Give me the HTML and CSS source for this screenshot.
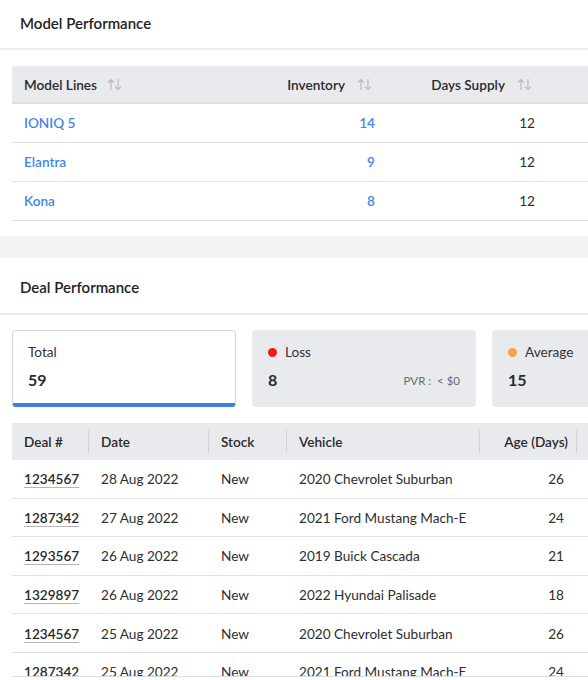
FILE: index.html
```html
<!DOCTYPE html>
<html>
<head>
<meta charset="utf-8">
<link rel="stylesheet" href="styles.css">
</head>
<body>
<div class="page">
  <section class="panel">
    <h2 class="panel-title first">Model Performance</h2>
    <div class="model-table">
      <div class="mt-row mt-head">
        <div class="mc name">Model Lines <svg class="sort" viewBox="0 0 15 13"><path d="M4 12V1.5M1 4.5L4 1.5L7 4.5M11 1V11.5M8 8.5L11 11.5L14 8.5"/></svg></div>
        <div class="mc inv">Inventory <svg class="sort" viewBox="0 0 15 13"><path d="M4 12V1.5M1 4.5L4 1.5L7 4.5M11 1V11.5M8 8.5L11 11.5L14 8.5"/></svg></div>
        <div class="mc days">Days Supply <svg class="sort" viewBox="0 0 15 13"><path d="M4 12V1.5M1 4.5L4 1.5L7 4.5M11 1V11.5M8 8.5L11 11.5L14 8.5"/></svg></div>
        <div class="mc"></div>
      </div>
      <div class="mt-row">
        <div class="mc name link">IONIQ 5</div>
        <div class="mc inv link">14</div>
        <div class="mc days">12</div>
        <div class="mc"></div>
      </div>
      <div class="mt-row">
        <div class="mc name link">Elantra</div>
        <div class="mc inv link">9</div>
        <div class="mc days">12</div>
        <div class="mc"></div>
      </div>
      <div class="mt-row">
        <div class="mc name link">Kona</div>
        <div class="mc inv link">8</div>
        <div class="mc days">12</div>
        <div class="mc"></div>
      </div>
    </div>
  </section>

  <div class="band"></div>

  <section class="panel">
    <h2 class="panel-title second">Deal Performance</h2>
    <div class="cards">
      <div class="card active">
        <div class="card-label">Total</div>
        <div class="card-value">59</div>
      </div>
      <div class="card">
        <div class="card-label"><span class="dot red"></span>Loss</div>
        <div class="card-bottom">
          <div class="card-value">8</div>
          <div class="pvr">PVR :&nbsp; &lt; $0</div>
        </div>
      </div>
      <div class="card">
        <div class="card-label"><span class="dot orange"></span>Average</div>
        <div class="card-value">15</div>
      </div>
    </div>

    <div class="deal-wrap">
      <div class="dt-row dt-head">
        <div class="dc deal">Deal #</div>
        <div class="dc date">Date</div>
        <div class="dc stock">Stock</div>
        <div class="dc veh">Vehicle</div>
        <div class="dc age">Age (Days)</div>
        <div class="dc fill"></div>
      </div>
      <div class="dt-row">
        <div class="dc deal"><span class="num">1234567</span></div>
        <div class="dc date">28 Aug 2022</div>
        <div class="dc stock">New</div>
        <div class="dc veh">2020 Chevrolet Suburban</div>
        <div class="dc age">26</div>
        <div class="dc fill"></div>
      </div>
      <div class="dt-row">
        <div class="dc deal"><span class="num">1287342</span></div>
        <div class="dc date">27 Aug 2022</div>
        <div class="dc stock">New</div>
        <div class="dc veh">2021 Ford Mustang Mach-E</div>
        <div class="dc age">24</div>
        <div class="dc fill"></div>
      </div>
      <div class="dt-row">
        <div class="dc deal"><span class="num">1293567</span></div>
        <div class="dc date">26 Aug 2022</div>
        <div class="dc stock">New</div>
        <div class="dc veh">2019 Buick Cascada</div>
        <div class="dc age">21</div>
        <div class="dc fill"></div>
      </div>
      <div class="dt-row">
        <div class="dc deal"><span class="num">1329897</span></div>
        <div class="dc date">26 Aug 2022</div>
        <div class="dc stock">New</div>
        <div class="dc veh">2022 Hyundai Palisade</div>
        <div class="dc age">18</div>
        <div class="dc fill"></div>
      </div>
      <div class="dt-row">
        <div class="dc deal"><span class="num">1234567</span></div>
        <div class="dc date">25 Aug 2022</div>
        <div class="dc stock">New</div>
        <div class="dc veh">2020 Chevrolet Suburban</div>
        <div class="dc age">26</div>
        <div class="dc fill"></div>
      </div>
      <div class="dt-row">
        <div class="dc deal"><span class="num">1287342</span></div>
        <div class="dc date">25 Aug 2022</div>
        <div class="dc stock">New</div>
        <div class="dc veh">2021 Ford Mustang Mach-E</div>
        <div class="dc age">24</div>
        <div class="dc fill"></div>
      </div>
    </div>
  </section>
</div>
</body>
</html>
```
FILE: styles.css
```css
* { box-sizing: border-box; }

html, body {
  margin: 0;
  padding: 0;
  background: #ffffff;
}

body {
  width: 588px;
  height: 680px;
  overflow: hidden;
  font-family: "Lato", "Noto Sans", sans-serif;
  font-size: 13.6px;
  color: #2e2e30;
}

.page {
  width: 588px;
  overflow: hidden;
}

.panel {
  background: #fff;
  overflow: hidden;
}

.panel-title {
  margin: 0;
  padding: 0 20px;
  font-size: 15px;
  line-height: 18px;
  font-weight: 600;
  color: #222;
  border-bottom: 2px solid #ebecee;
}

.panel-title.first {
  padding-top: 14px;
  padding-bottom: 16px;
}

.panel-title.second {
  padding-top: 20px;
  padding-bottom: 17px;
}

/* Model table */
.model-table {
  margin: 16px 0 15px 12px;
}

.mt-row {
  display: grid;
  grid-template-columns: 265px 110px 160px 1fr;
  height: 39px;
  align-items: center;
  border-bottom: 1px solid #e0e1e4;
}

.mt-head {
  height: 38px;
  background: #e9eaed;
  border-bottom: 2px solid #dfe0e3;
  font-weight: 600;
  color: #2a2a2c;
  padding-top: 1px;
}

.mc {
  display: flex;
  align-items: center;
  line-height: 18px;
}

.mc.name { padding-left: 12px; }
.mc.inv { justify-content: flex-end; padding-right: 12px; }
.mc.days { justify-content: flex-end; padding-right: 12px; }
.mt-head .mc.inv { padding-right: 15px; }
.mt-head .mc.days { padding-right: 15px; }

.link {
  color: #3f86ea;
  font-weight: 600;
}

.sort {
  width: 15px;
  height: 13px;
  margin-left: 10px;
  fill: none;
  stroke: #b9bcc1;
  stroke-width: 1.2;
}
.mt-head .inv .sort, .mt-head .days .sort { margin-left: 12px; }

.band {
  height: 22px;
  background: #f1f2f4;
}

/* Cards */
.cards {
  display: flex;
  gap: 16px;
  margin: 15px 0 0 12px;
}

.card {
  flex: 0 0 224px;
  height: 77px;
  border-radius: 4px;
  background: #e9eaed;
  padding: 14px 16px 0 16px;
}

.card.active {
  background: #fff;
  border: 1px solid #d5d6d9;
  border-bottom: 4px solid #3a7fe2;
  padding: 13px 15px 0 15px;
}

.card-label {
  display: flex;
  align-items: center;
  line-height: 16px;
  font-size: 13.6px;
  color: #333;
}

.dot {
  width: 9px;
  height: 9px;
  border-radius: 50%;
  margin-right: 8px;
}
.dot.red { background: #ee1c1c; }
.dot.orange { background: #f7a43d; }

.card-bottom {
  display: flex;
  align-items: center;
  justify-content: space-between;
}

.card-value {
  margin-top: 10px;
  font-size: 16px;
  line-height: 20px;
  font-weight: 700;
  color: #2a2a2a;
}

.pvr {
  margin-top: 10px;
  font-size: 11.5px;
  color: #6a6b6e;
}

/* Deal table */
.deal-wrap {
  margin: 16px 0 0 12px;
  height: 254px;
  overflow: hidden;
  border-bottom: 1px solid #dcdde0;
}

.dt-row {
  display: grid;
  grid-template-columns: 77px 120px 78px 193px 97px 1fr;
  height: 38.6px;
  align-items: center;
  border-bottom: 1px solid #e0e1e4;
  padding-top: 1px;
}

.dt-head {
  height: 37px;
  background: #e9eaed;
  border-bottom: none;
  font-weight: 600;
  color: #2a2a2c;
  padding-top: 0;
}

.dc {
  padding-left: 12px;
  line-height: 18px;
  white-space: nowrap;
}

.dt-head .dc {
  border-right: 1px solid #d3d4d8;
  height: 23px;
  display: flex;
  align-items: center;
}
.dt-head .dc.fill { border-right: none; }

.dc.age {
  text-align: right;
  padding-right: 13px;
}
.dt-head .dc.age {
  justify-content: flex-end;
  padding-right: 8px;
}

.num {
  font-weight: 600;
  color: #2a2a2a;
  text-decoration: underline;
  text-decoration-color: #b3b5b9;
  text-decoration-thickness: 1px;
  text-underline-offset: 3px;
}
```
